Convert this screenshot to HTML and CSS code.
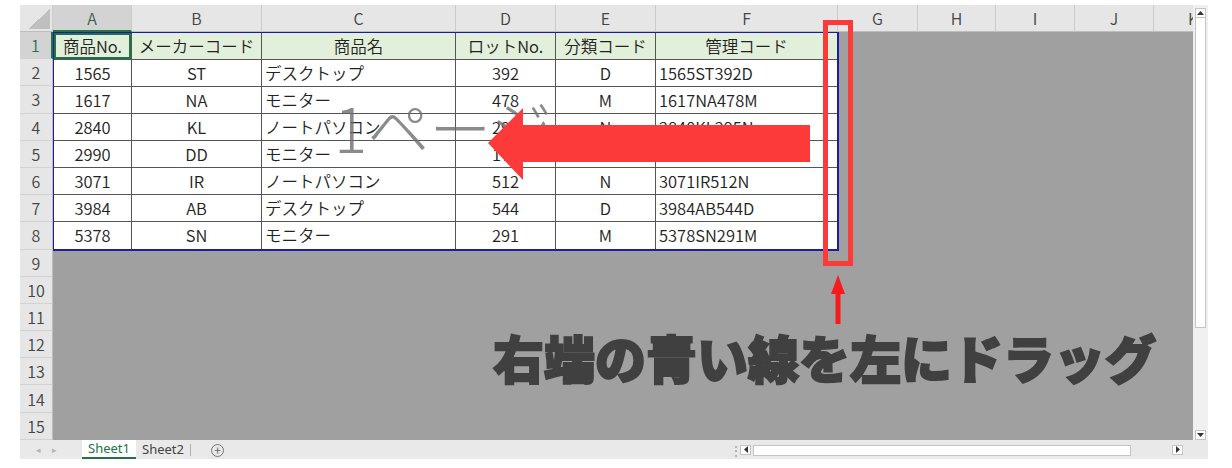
FILE: index.html
```html
<!DOCTYPE html>
<html lang="ja">
<head>
    <meta charset="UTF-8" />
    <meta name="viewport" content="width=device-width, initial-scale=1.0" />
    <title>改ページプレビュー</title>
    <link rel="stylesheet" href="styles.css">
</head>
<body>
    <div class="book">
        <div class="main">
            <div class="sheet">
                <div class="col-heads">
                    <div class="col-head corner"></div>
                    <div class="col-head selected">A</div>
                    <div class="col-head">B</div>
                    <div class="col-head">C</div>
                    <div class="col-head">D</div>
                    <div class="col-head">E</div>
                    <div class="col-head">F</div>
                    <div class="col-head">G</div>
                    <div class="col-head">H</div>
                    <div class="col-head">I</div>
                    <div class="col-head">J</div>
                    <div class="col-head">K</div>
                </div>

                <div class="sheet-body">
                    <div class="row-heads">
                        <div class="row-head selected">1</div>
                        <div class="row-head">2</div>
                        <div class="row-head">3</div>
                        <div class="row-head">4</div>
                        <div class="row-head">5</div>
                        <div class="row-head">6</div>
                        <div class="row-head">7</div>
                        <div class="row-head">8</div>
                        <div class="row-head">9</div>
                        <div class="row-head">10</div>
                        <div class="row-head">11</div>
                        <div class="row-head">12</div>
                        <div class="row-head">13</div>
                        <div class="row-head">14</div>
                        <div class="row-head">15</div>
                    </div>

                    <div class="canvas">
                        <div class="data">
                            <div class="cell head active">商品No.</div>
                            <div class="cell head">メーカーコード</div>
                            <div class="cell head">商品名</div>
                            <div class="cell head">ロットNo.</div>
                            <div class="cell head">分類コード</div>
                            <div class="cell head">管理コード</div>

                            <div class="cell">1565</div>
                            <div class="cell">ST</div>
                            <div class="cell text">デスクトップ</div>
                            <div class="cell">392</div>
                            <div class="cell">D</div>
                            <div class="cell text">1565ST392D</div>

                            <div class="cell">1617</div>
                            <div class="cell">NA</div>
                            <div class="cell text">モニター</div>
                            <div class="cell">478</div>
                            <div class="cell">M</div>
                            <div class="cell text">1617NA478M</div>

                            <div class="cell">2840</div>
                            <div class="cell">KL</div>
                            <div class="cell text">ノートパソコン</div>
                            <div class="cell">295</div>
                            <div class="cell">N</div>
                            <div class="cell text">2840KL295N</div>

                            <div class="cell">2990</div>
                            <div class="cell">DD</div>
                            <div class="cell text">モニター</div>
                            <div class="cell">174</div>
                            <div class="cell">M</div>
                            <div class="cell text">2990DD174M</div>

                            <div class="cell">3071</div>
                            <div class="cell">IR</div>
                            <div class="cell text">ノートパソコン</div>
                            <div class="cell">512</div>
                            <div class="cell">N</div>
                            <div class="cell text">3071IR512N</div>

                            <div class="cell">3984</div>
                            <div class="cell">AB</div>
                            <div class="cell text">デスクトップ</div>
                            <div class="cell">544</div>
                            <div class="cell">D</div>
                            <div class="cell text">3984AB544D</div>

                            <div class="cell">5378</div>
                            <div class="cell">SN</div>
                            <div class="cell text">モニター</div>
                            <div class="cell">291</div>
                            <div class="cell">M</div>
                            <div class="cell text">5378SN291M</div>
                        </div>
                    </div>
                </div>

                <!-- annotations drawn over the sheet -->
                <div class="page-mark">1ページ</div>
                <svg class="arrow-left" width="323" height="73" viewBox="0 0 323 73">
                    <polygon points="0,35 35,0 35,17 322,17 322,54 35,54 35,72" fill="#fd3a3a" />
                </svg>
                <div class="mark-box"></div>
                <svg class="arrow-up" width="14" height="49" viewBox="0 0 14 49">
                    <polygon points="7,0 14,19 9.5,19 9.5,49 4.5,49 4.5,19 0,19" fill="#f71b1b" />
                </svg>
                <div class="caption">右端の青い線を左にドラッグ</div>
            </div>

            <div class="vscroll">
                <div class="sb-btn">
                    <svg width="7" height="4" viewBox="0 0 7 4"><polygon points="3.5,0 7,4 0,4" fill="#333" /></svg>
                </div>
                <div class="vthumb"></div>
                <div class="sb-fill"></div>
                <div class="sb-btn">
                    <svg width="7" height="4" viewBox="0 0 7 4"><polygon points="0,0 7,0 3.5,4" fill="#333" /></svg>
                </div>
            </div>
        </div>

        <div class="tabbar">
            <div class="tab-nav"><span>◂</span><span>▸</span></div>
            <div class="tab active">Sheet1</div>
            <div class="tab">Sheet2</div>
            <div class="tab-sep"></div>
            <div class="tab-add">+</div>
            <div class="splitter">⋮</div>
            <div class="hscroll">
                <div class="sb-btn">
                    <svg width="4" height="7" viewBox="0 0 4 7"><polygon points="4,0 4,7 0,3.5" fill="#333" /></svg>
                </div>
                <div class="hthumb"></div>
                <div class="sb-fill"></div>
                <div class="sb-btn">
                    <svg width="4" height="7" viewBox="0 0 4 7"><polygon points="0,0 4,3.5 0,7" fill="#333" /></svg>
                </div>
            </div>
        </div>
    </div>
</body>
</html>
```

FILE: styles.css
```css
html, body {
    margin: 0;
    padding: 0;
    background: #fff;
    font-family: "Noto Sans CJK JP", "Noto Sans", sans-serif;
    color: #222;
}

.book {
    width: 1188px;
    margin: 5px 0 0 20px;
}

.main {
    display: flex;
}

.sheet {
    position: relative;
    width: 1173px;
}

/* headers */

.col-heads {
    display: grid;
    grid-template-columns: 33px 79px 130px 194px 100px 100px 182px 80px 78px 79px 79px 79px;
    height: 27px;
    overflow: hidden;
    background: #e6e6e6;
}

.col-head {
    display: flex;
    align-items: center;
    justify-content: center;
    box-sizing: border-box;
    border-right: 1px solid #cbcbcb;
    border-bottom: 1px solid #bdbdbd;
    font-size: 16px;
    font-weight: 350;
    color: #444;
}

.col-head.selected {
    background: #d3d3d3;
    color: #3a5a47;
    border-bottom: 2px solid #217346;
}

.corner {
    background: linear-gradient(to bottom right, transparent 50%, #bfbfbf 50%) no-repeat right 2px bottom 2px / 22px 20px;
}

.sheet-body {
    display: flex;
}

.row-heads {
    flex: none;
    width: 33px;
    background: #e6e6e6;
}

.row-head {
    height: 27.2px;
    box-sizing: border-box;
    border-bottom: 1px solid #d2d2d2;
    border-right: 1px solid #bdbdbd;
    display: flex;
    align-items: center;
    justify-content: center;
    font-size: 16px;
    font-weight: 350;
    color: #444;
}

.row-head.selected {
    background: #d3d3d3;
    color: #217346;
    border-right: 2px solid #217346;
}

/* print area */

.canvas {
    flex: 1;
    background: #a0a0a0;
}

.data {
    display: grid;
    grid-template-columns: 78px 130px 194px 100px 100px 181px;
    grid-auto-rows: 27px;
    width: max-content;
    background: #fff;
    border: solid #1c1ca8;
    border-width: 1px 2px 2px 1px;
}

.cell {
    display: flex;
    align-items: center;
    justify-content: center;
    box-sizing: border-box;
    padding: 0 3px;
    border-right: 1px solid #555;
    border-bottom: 1px solid #555;
    font-size: 16.5px;
    font-weight: 350;
    line-height: 1;
    white-space: nowrap;
}

.cell:nth-child(6n) {
    border-right: none;
}

.cell:nth-child(n+43) {
    border-bottom: none;
}

.cell.text {
    justify-content: flex-start;
}

.cell.head {
    background: #e2efda;
}

.cell.active {
    box-shadow: inset 0 0 0 2px #217346;
}

/* annotations */

.page-mark {
    position: absolute;
    left: 314px;
    top: 90px;
    font-size: 62px;
    font-weight: 300;
    line-height: 1;
    color: rgba(110, 110, 110, 0.8);
    white-space: nowrap;
}

.arrow-left {
    position: absolute;
    left: 468px;
    top: 103px;
}

.mark-box {
    position: absolute;
    left: 803px;
    top: 15px;
    width: 30px;
    height: 246px;
    box-sizing: border-box;
    border: 5px solid #fd3a3a;
}

.arrow-up {
    position: absolute;
    left: 811px;
    top: 270px;
}

.caption {
    position: absolute;
    left: 473px;
    top: 327px;
    font-size: 51px;
    font-weight: 900;
    line-height: 1;
    color: #404040;
    -webkit-text-stroke: 2px #404040;
    white-space: nowrap;
}

/* scrollbars */

.vscroll {
    width: 15px;
    background: #f0f0f0;
    display: flex;
    flex-direction: column;
    align-items: center;
    padding: 3px 0 0;
    box-sizing: border-box;
}

.sb-btn {
    flex: none;
    width: 11px;
    height: 10px;
    box-sizing: border-box;
    background: #fff;
    border: 1px solid #c4c4c4;
    display: flex;
    align-items: center;
    justify-content: center;
}

.vthumb {
    width: 11px;
    height: 310px;
    box-sizing: border-box;
    background: #fff;
    border: 1px solid #c4c4c4;
    border-top: none;
}

.sb-fill {
    flex: 1;
}

.tabbar {
    display: flex;
    align-items: stretch;
    height: 19px;
    background: #e9e9e9;
    font-size: 13px;
    color: #444;
}

.tab-nav {
    width: 62px;
    display: flex;
    align-items: center;
    gap: 11px;
    padding-left: 16px;
    box-sizing: border-box;
    font-size: 9px;
    color: #b5b5b5;
}

.tab {
    display: flex;
    align-items: center;
    justify-content: center;
    box-sizing: border-box;
    width: 54px;
    font-family: "Noto Sans", sans-serif;
}

.tab.active {
    background: #fff;
    color: #217346;
    border-bottom: 2px solid #217346;
}

.tab-sep {
    width: 1px;
    margin: 4px 0 3px;
    background: #b0b0b0;
}

.tab-add {
    width: 11px;
    height: 11px;
    margin: 4px 0 0 20px;
    border: 1px solid #777;
    border-radius: 50%;
    display: flex;
    align-items: center;
    justify-content: center;
    font-size: 12px;
    line-height: 1;
    color: #666;
}

.splitter {
    margin-left: auto;
    width: 10px;
    display: flex;
    align-items: center;
    font-size: 12px;
    color: #9a9a9a;
}

.hscroll {
    width: 443px;
    margin: 5px 25px 0 0;
    height: 11px;
    display: flex;
}

.hthumb {
    width: 378px;
    margin-left: 2px;
    box-sizing: border-box;
    background: #fff;
    border: 1px solid #c4c4c4;
}
```
